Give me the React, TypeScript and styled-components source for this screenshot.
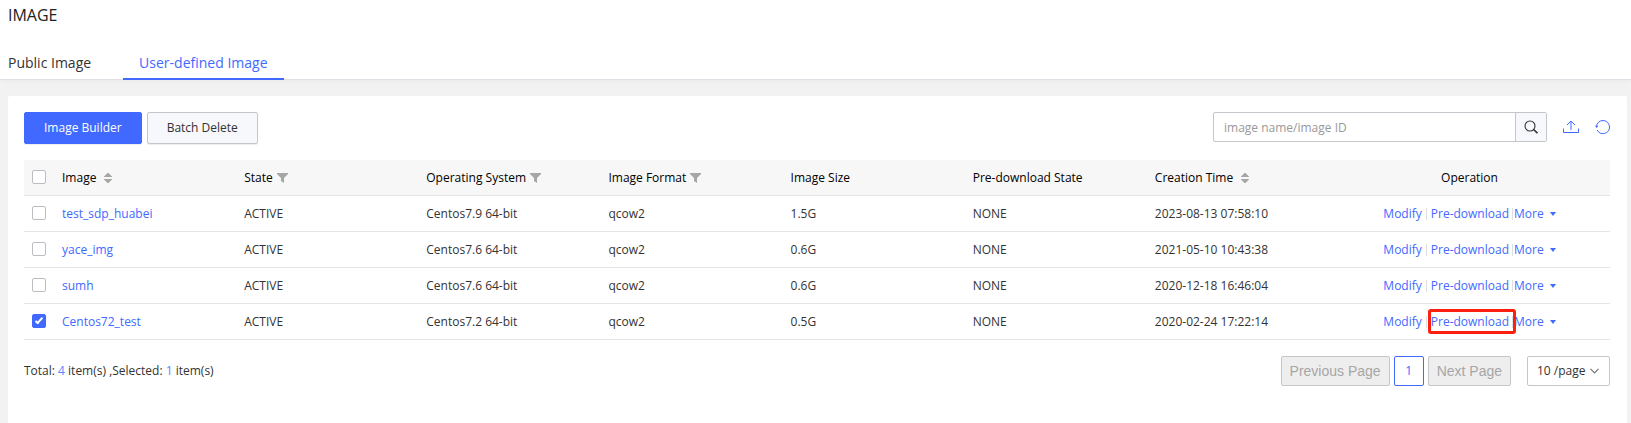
import React, { useState } from "react";
import styled, { createGlobalStyle } from "styled-components";

const GlobalStyle = createGlobalStyle`
  *, *::before, *::after { box-sizing: border-box; }
  body {
    margin: 0;
    background: #f2f2f2;
    color: #333;
    font: 12px/18px "Open Sans", "Noto Sans", sans-serif;
  }
  button, input, select { font: inherit; color: inherit; margin: 0; }
  button { cursor: pointer; }
`;

const Page = styled.div`
  display: flex;
  flex-direction: column;
  min-height: 100vh;
`;

const Header = styled.header`
  background: #fff;
  border-bottom: 1px solid #dfe1e6;
  box-shadow: 0 1px 6px rgba(0, 20, 60, 0.04);
`;

const Title = styled.h1`
  margin: 0;
  padding: 4px 8px 0;
  height: 48px;
  font-size: 16px;
  line-height: 22px;
  font-weight: 400;
  color: #222;
`;

const Tabs = styled.div`
  display: flex;
  gap: 32px;
  padding-left: 8px;
  margin-bottom: -1px;
`;

const Tab = styled.button<{ $active?: boolean }>`
  height: 32px;
  padding: 0 ${(p) => (p.$active ? "16px" : "0")};
  border: 0;
  border-bottom: 2px solid ${(p) => (p.$active ? "#4169ff" : "transparent")};
  background: none;
  font-size: 14px;
  line-height: 30px;
  color: ${(p) => (p.$active ? "#4169ff" : "#333")};
`;

const Panel = styled.main`
  flex: 1;
  margin: 16px 4px 0 8px;
  padding: 16px 17px 16px 16px;
  background: #fff;
  border-radius: 2px 2px 0 0;
`;

const Toolbar = styled.div`
  display: flex;
  justify-content: space-between;
  align-items: flex-start;
  margin-bottom: 16px;
`;

const Actions = styled.div`
  display: flex;
  gap: 5px;
`;

const ActionButton = styled.button<{ $primary?: boolean }>`
  height: 32px;
  padding: 0 19px;
  border: 1px solid ${(p) => (p.$primary ? "#4169ff" : "#c4c6cc")};
  border-radius: 2px;
  background: ${(p) => (p.$primary ? "#4169ff" : "#f7f8fb")};
  color: ${(p) => (p.$primary ? "#fff" : "#333")};
  box-shadow: 0 1px 1px rgba(0, 0, 0, 0.07);
`;

const Tools = styled.div`
  display: flex;
  align-items: center;
  gap: 16px;
`;

const SearchForm = styled.form`
  display: flex;
  width: 334px;
  height: 30px;
  border: 1px solid #c4c6cc;
  border-radius: 2px;
`;

const SearchInput = styled.input`
  flex: 1;
  min-width: 0;
  padding: 2px 10px 0;
  border: 0;
  outline: 0;
  background: none;
  &::placeholder { color: #999; opacity: 1; }
`;

const SearchButton = styled.button`
  display: flex;
  align-items: center;
  justify-content: center;
  width: 31px;
  padding: 0;
  border: 0;
  border-left: 1px solid #c4c6cc;
  background: #f7f8fb;
`;

const IconButton = styled.button`
  display: flex;
  padding: 0;
  border: 0;
  background: none;
  color: #4169ff;
`;

const DataTable = styled.table`
  width: 100%;
  table-layout: fixed;
  border-collapse: separate;
  border-spacing: 0;
`;

const SelectCol = styled.col`
  width: 30px;
`;

const OperationCol = styled.col`
  width: 281px;
`;

const HeadCell = styled.th<{ $center?: boolean }>`
  height: 36px;
  padding: 0 8px;
  border-bottom: 1px solid #e3e4e6;
  background: #f7f7f7;
  color: #000;
  font-weight: 400;
  text-align: ${(p) => (p.$center ? "center" : "left")};
  white-space: nowrap;
`;

const HeadLabel = styled.span<{ $gap: number }>`
  display: inline-flex;
  align-items: center;
  gap: ${(p) => p.$gap}px;
  vertical-align: middle;
`;

const Cell = styled.td`
  height: 36px;
  padding: 0 8px;
  border-bottom: 1px solid #e3e4e6;
  white-space: nowrap;
`;

const Check = styled.input`
  appearance: none;
  display: block;
  position: relative;
  width: 14px;
  height: 14px;
  && { margin: 0 0 1px; }
  border: 1px solid #bbbdc2;
  border-radius: 2px;
  background: #fff;
  &:checked {
    border-color: #4169ff;
    background: #4169ff;
  }
  &:checked::after {
    content: "";
    position: absolute;
    left: 4px;
    top: 1px;
    width: 4px;
    height: 8px;
    border: solid #fff;
    border-width: 0 2px 2px 0;
    transform: rotate(42deg);
  }
`;

const NameLink = styled.a`
  color: #4169ff;
  text-decoration: none;
`;

const Operations = styled.div`
  display: flex;
  justify-content: center;
  align-items: center;
`;

const Operation = styled.button`
  display: flex;
  align-items: center;
  gap: 6px;
  padding: 0;
  border: 0;
  background: none;
  color: #4169ff;
`;

const OperationSlot = styled.div<{ $marked?: boolean }>`
  position: relative;
  padding: 0 3px 0 4px;
  border-left: 1px solid #dcdee2;
  border-right: 1px solid #dcdee2;
  line-height: 12px;
  height: 12px;
  display: flex;
  align-items: center;
  margin: 0 1px 0 4px;
  ${(p) =>
    p.$marked &&
    `&::after {
      content: "";
      position: absolute;
      inset: -7px -4px -6px 1px;
      border: 3px solid #ff1f0f;
      border-radius: 3px;
      pointer-events: none;
    }`}
`;

const Footer = styled.footer`
  display: flex;
  justify-content: space-between;
  align-items: center;
  margin-top: 16px;
`;

const Count = styled.span`
  color: #5488ff;
`;

const Pager = styled.nav`
  display: flex;
  gap: 4px;
`;

const PageButton = styled.button<{ $current?: boolean }>`
  height: 30px;
  min-width: 30px;
  padding: 0 8px;
  border: 1px solid ${(p) => (p.$current ? "#4169ff" : "#c4c6cc")};
  border-radius: 2px;
  background: ${(p) => (p.$current ? "#fff" : "#eee")};
  color: ${(p) => (p.$current ? "#4169ff" : "#a6a6a6")};
  ${(p) => !p.$current && 'font: 14px/18px "Liberation Sans", Arial, sans-serif;'}
`;

const SizePicker = styled.label`
  position: relative;
  display: flex;
  margin-left: 12px;
`;

const SizeSelect = styled.select`
  appearance: none;
  width: 83px;
  height: 30px;
  padding: 0 0 0 9px;
  border: 1px solid #c4c6cc;
  border-radius: 2px;
  background: #fff;
`;

const SelectArrow = styled.svg`
  position: absolute;
  right: 11px;
  top: 12px;
  pointer-events: none;
`;

const SortIcon = () => (
  <svg width="8" height="10" viewBox="0 0 8 10" fill="#a6a6a6" aria-hidden="true">
    <path d="M3.5 0h1L8 3.5V4H0v-.5zM3.5 10h1L8 6.5V6H0v.5z" />
  </svg>
);

const FilterIcon = () => (
  <svg width="11" height="10" viewBox="0 0 11 10" fill="#a6a6a6" aria-hidden="true">
    <path d="M0 0h11v1L7 5v5L4 8V5L0 1z" />
  </svg>
);

const SearchIcon = () => (
  <svg width="14" height="14" viewBox="0 0 14 14" fill="none" stroke="#333" aria-hidden="true">
    <circle cx="6" cy="6" r="5" strokeWidth="1.1" />
    <path d="m9.5 9.5 4 3.7" strokeWidth="1.7" />
  </svg>
);

const UploadIcon = () => (
  <svg width="16" height="14" viewBox="0 0 16 14" fill="none" stroke="currentColor" aria-hidden="true">
    <path d="M.5 8.5v4h15v-4M8 10V1M4 5l4-4 4 4" />
  </svg>
);

const RefreshIcon = () => (
  <svg width="15" height="15" viewBox="0 0 15 15" fill="none" stroke="currentColor" aria-hidden="true">
    <path d="M1.5 7A6.5 6.5 0 0 1 14.5 7A6.5 6.5 0 0 1 2.2 10" />
    <path d="M0 5.8h3.4L1.6 8z" fill="currentColor" stroke="none" />
  </svg>
);

const CaretIcon = () => (
  <svg width="6" height="4" viewBox="0 0 6 4" fill="currentColor" aria-hidden="true">
    <path d="M0 0h6L3 4z" />
  </svg>
);

type Marker = "sort" | "filter";

const columns: { label: string; marker?: Marker }[] = [
  { label: "Image", marker: "sort" },
  { label: "State", marker: "filter" },
  { label: "Operating System", marker: "filter" },
  { label: "Image Format", marker: "filter" },
  { label: "Image Size" },
  { label: "Pre-download State" },
  { label: "Creation Time", marker: "sort" },
];

const images = [
  { name: "test_sdp_huabei", os: "Centos7.9 64-bit", size: "1.5G", created: "2023-08-13 07:58:10" },
  { name: "yace_img", os: "Centos7.6 64-bit", size: "0.6G", created: "2021-05-10 10:43:38" },
  { name: "sumh", os: "Centos7.6 64-bit", size: "0.6G", created: "2020-12-18 16:46:04" },
  { name: "Centos72_test", os: "Centos7.2 64-bit", size: "0.5G", created: "2020-02-24 17:22:14" },
];

export default function App() {
  const [selected, setSelected] = useState<string[]>(["Centos72_test"]);
  const toggle = (name: string) =>
    setSelected((s) => (s.includes(name) ? s.filter((n) => n !== name) : [...s, name]));
  const all = selected.length === images.length;

  return (
    <Page>
      <GlobalStyle />
      <Header>
        <Title>IMAGE</Title>
        <Tabs role="tablist">
          <Tab role="tab" aria-selected={false}>Public Image</Tab>
          <Tab role="tab" aria-selected $active>User-defined Image</Tab>
        </Tabs>
      </Header>
      <Panel>
        <Toolbar>
          <Actions>
            <ActionButton $primary>Image Builder</ActionButton>
            <ActionButton>Batch Delete</ActionButton>
          </Actions>
          <Tools>
            <SearchForm onSubmit={(e) => e.preventDefault()}>
              <SearchInput aria-label="Search images" placeholder="image name/image ID" />
              <SearchButton aria-label="Search"><SearchIcon /></SearchButton>
            </SearchForm>
            <IconButton aria-label="Export"><UploadIcon /></IconButton>
            <IconButton aria-label="Refresh"><RefreshIcon /></IconButton>
          </Tools>
        </Toolbar>
        <DataTable>
          <colgroup>
            <SelectCol />
            {columns.map((c) => <col key={c.label} />)}
            <OperationCol />
          </colgroup>
          <thead>
            <tr>
              <HeadCell>
                <Check
                  type="checkbox"
                  aria-label="Select all"
                  checked={all}
                  onChange={() => setSelected(all ? [] : images.map((i) => i.name))}
                />
              </HeadCell>
              {columns.map(({ label, marker }) => (
                <HeadCell key={label}>
                  <HeadLabel $gap={marker === "sort" ? 8 : 4}>
                    {label}
                    {marker === "sort" && <SortIcon />}
                    {marker === "filter" && <FilterIcon />}
                  </HeadLabel>
                </HeadCell>
              ))}
              <HeadCell $center>Operation</HeadCell>
            </tr>
          </thead>
          <tbody>
            {images.map((image) => (
              <tr key={image.name}>
                <Cell>
                  <Check
                    type="checkbox"
                    aria-label={`Select ${image.name}`}
                    checked={selected.includes(image.name)}
                    onChange={() => toggle(image.name)}
                  />
                </Cell>
                <Cell><NameLink href="#">{image.name}</NameLink></Cell>
                <Cell>ACTIVE</Cell>
                <Cell>{image.os}</Cell>
                <Cell>qcow2</Cell>
                <Cell>{image.size}</Cell>
                <Cell>NONE</Cell>
                <Cell>{image.created}</Cell>
                <Cell>
                  <Operations>
                    <Operation>Modify</Operation>
                    <OperationSlot $marked={selected.includes(image.name)}>
                      <Operation>Pre-download</Operation>
                    </OperationSlot>
                    <Operation>More <CaretIcon /></Operation>
                  </Operations>
                </Cell>
              </tr>
            ))}
          </tbody>
        </DataTable>
        <Footer>
          <span>
            Total: <Count>{images.length}</Count> item(s) ,Selected: <Count>{selected.length}</Count> item(s)
          </span>
          <Pager aria-label="Pagination">
            <PageButton disabled>Previous Page</PageButton>
            <PageButton $current aria-current="page">1</PageButton>
            <PageButton disabled>Next Page</PageButton>
            <SizePicker>
              <SizeSelect aria-label="Items per page" defaultValue="10">
                <option value="10">10 /page</option>
                <option value="20">20 /page</option>
                <option value="50">50 /page</option>
              </SizeSelect>
              <SelectArrow width="9" height="6" viewBox="0 0 9 6" fill="none" stroke="#777" strokeWidth="1.2" aria-hidden="true">
                <path d="m.5.8 4 4 4-4" />
              </SelectArrow>
            </SizePicker>
          </Pager>
        </Footer>
      </Panel>
    </Page>
  );
}
